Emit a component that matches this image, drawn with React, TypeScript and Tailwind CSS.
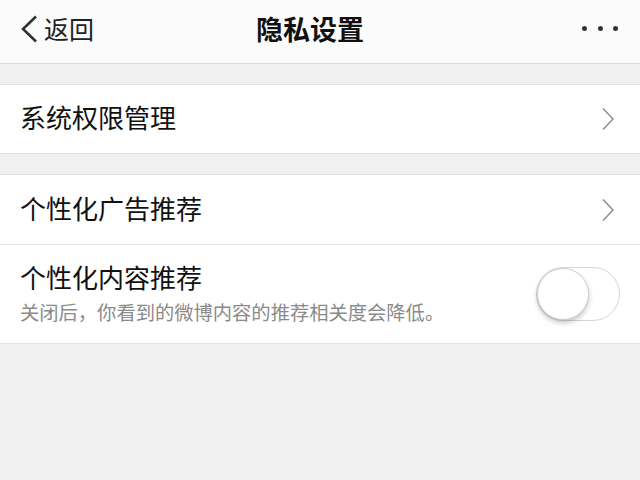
import React from "react";

const font = { fontFamily: '"Noto Sans CJK SC", "Noto Sans", sans-serif' };

function Chevron() {
  return (
    <svg width="12" height="24" viewBox="0 0 12 24" className="shrink-0">
      <polyline points="1,1.5 11,12 1,22.5" fill="none" stroke="#8a8a8a" strokeWidth="1.4" />
    </svg>
  );
}

export default function App() {
  return (
    <div className="w-[640px] h-[480px] bg-[#f0f0f0] overflow-hidden" style={font}>
      <div className="h-16 bg-[#fbfbfb] border-b border-[#dcdcdc] grid grid-cols-[1fr_auto_1fr] items-center pb-[6px]">
        <div className="flex items-center pl-[20px]">
          <svg width="18" height="28" viewBox="0 0 18 28">
            <polyline points="16,1.5 3,14 16,26.5" fill="none" stroke="#333" strokeWidth="2.6" />
          </svg>
          <span className="ml-[6px] text-[25px] leading-none text-[#222]">返回</span>
        </div>
        <div className="text-[27px] font-bold leading-none text-[#111] -translate-x-[10px]">隐私设置</div>
        <div className="flex justify-end items-center gap-[10.5px] pr-[22px]">
          <span className="w-[5px] h-[5px] rounded-full bg-[#333]" />
          <span className="w-[5px] h-[5px] rounded-full bg-[#333]" />
          <span className="w-[5px] h-[5px] rounded-full bg-[#333]" />
        </div>
      </div>

      <div className="mt-[20px] h-[70px] bg-white border-y border-[#e2e2e2] flex items-center justify-between pl-[20px] pr-[26px]">
        <span className="text-[26px] leading-[26px] text-[#111] -translate-y-[2px]">系统权限管理</span>
        <Chevron />
      </div>

      <div className="mt-[20px] bg-white border-y border-[#e2e2e2]">
        <div className="h-[70px] border-b border-[#e6e6e6] flex items-center justify-between pl-[20px] pr-[26px]">
          <span className="text-[26px] leading-[26px] text-[#111] -translate-y-[2px]">个性化广告推荐</span>
          <Chevron />
        </div>
        <div className="h-[98px] flex items-center justify-between pl-[20px] pr-[20px]">
          <div className="flex flex-col -translate-y-[1px]">
            <span className="text-[26px] leading-[32px] text-[#111]">个性化内容推荐</span>
            <span className="mt-[6px] text-[19.3px] leading-[26px] text-[#8a8a8a]">关闭后，你看到的微博内容的推荐相关度会降低。</span>
          </div>
          <div className="w-[84px] h-[54px] rounded-full border border-[#d6d6d6] bg-white flex items-center">
            <div className="w-[52px] h-[52px] rounded-full bg-white border border-[#cfcfcf] shadow-[0_3px_5px_rgba(0,0,0,0.22)]" />
          </div>
        </div>
      </div>
    </div>
  );
}
